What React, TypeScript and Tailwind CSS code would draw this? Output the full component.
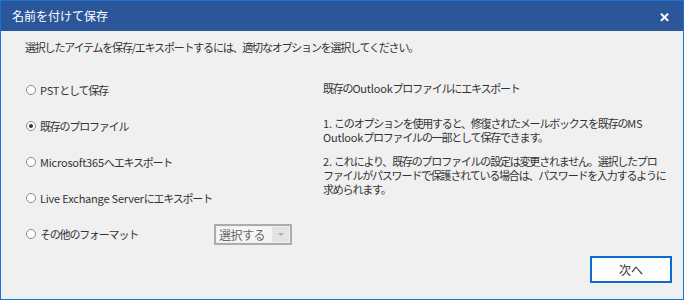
import React from "react";

const font = { fontFamily: '"Noto Sans CJK JP", "Noto Sans", sans-serif' };

const options = [
  { label: "PSTとして保存", checked: false },
  { label: "既存のプロファイル", checked: true },
  { label: "Microsoft365へエキスポート", checked: false },
  { label: "Live Exchange Serverにエキスポート", checked: false },
  { label: "その他のフォーマット", checked: false },
];

// Latin runs keep normal spacing, Japanese runs are condensed like Meiryo UI
const Txt: React.FC<{ children: string }> = ({ children }) => (
  <>
    {children.split(/([\x20-\x7e]+)/).map((part, i) =>
      /^[\x20-\x7e]+$/.test(part) ? (
        <span key={i} className="inline-block whitespace-pre tracking-[-0.2px]">
          {part}
        </span>
      ) : (
        <span key={i} className="inline-block">
          {part}
        </span>
      )
    )}
  </>
);

const Radio: React.FC<{ checked: boolean }> = ({ checked }) => (
  <span className="w-[10px] h-[10px] rounded-full border border-[#8a8a8a] bg-white flex items-center justify-center shrink-0">
    {checked && <span className="w-[4px] h-[4px] rounded-full bg-[#333]" />}
  </span>
);

export default function App() {
  return (
    <div className="w-[685px] h-[302px] bg-white" style={font}>
      <div className="w-[684px] h-[300px] border border-[#1a73d4] bg-[#f0f0f0] flex flex-col">
        {/* Title bar */}
        <div className="h-[30px] bg-[#2b579a] flex items-center justify-between pl-[11px] pr-[13px] shrink-0">
          <span className="text-white text-[12px] leading-none">名前を付けて保存</span>
          <span className="text-white text-[13px] font-bold leading-none">✕</span>
        </div>

        <div className="flex-1 flex flex-col pl-[24px] pr-[11px] text-[#333] text-[11px] tracking-[-1.2px]">
          <p className="mt-[9px] leading-[14px]">
            選択したアイテムを保存/エキスポートするには、適切なオプションを選択してください。
          </p>

          <div className="flex mt-[28px]">
            {/* Options */}
            <div className="w-[298px] flex flex-col gap-[20px] pl-[1px]">
              {options.map((o) => (
                <div key={o.label} className="h-[16px] flex items-center gap-[4px]">
                  <Radio checked={o.checked} />
                  <span className="leading-[16px] whitespace-nowrap">
                    <Txt>{o.label}</Txt>
                  </span>
                  {o.label === "その他のフォーマット" && (
                    <div className="ml-[72px] mt-[1px] w-[78px] h-[21px] border-2 border-[#acacac] p-[1px] flex tracking-normal">
                      <div className="flex-1 bg-[#f5f5f5] text-[#666] text-[12px] leading-[15px] pl-[2px] tracking-[-0.5px]">
                        選択する
                      </div>
                      <div className="w-[17px] bg-[#e3e3e3] flex items-center justify-center">
                        <span className="w-0 h-0 border-l-[3px] border-r-[3px] border-t-[3px] border-l-transparent border-r-transparent border-t-[#b0b0b0]" />
                      </div>
                    </div>
                  )}
                </div>
              ))}
            </div>

            {/* Description */}
            <div className="flex-1 flex flex-col whitespace-nowrap leading-[14px] -mt-[1px]">
              <p>
                <Txt>既存のOutlookプロファイルにエキスポート</Txt>
              </p>
              <p className="mt-[21px]">
                <Txt>1. このオプションを使用すると、修復されたメールボックスを既存のMS</Txt>
                <br />
                <Txt>Outlookプロファイルの一部として保存できます。</Txt>
              </p>
              <p className="mt-[10px]">
                <Txt>2. これにより、既存のプロファイルの設定は変更されません。選択したプロ</Txt>
                <br />
                <Txt>ファイルがパスワードで保護されている場合は、パスワードを入力するように</Txt>
                <br />
                <Txt>求められます。</Txt>
              </p>
            </div>
          </div>

          <div className="flex justify-end mt-auto mb-[16px]">
            <button className="w-[82px] h-[27px] border-2 border-[#0b6acf] bg-[#fdfdfd] text-[12px] text-[#333] tracking-normal">
              次へ
            </button>
          </div>
        </div>
      </div>
    </div>
  );
}
